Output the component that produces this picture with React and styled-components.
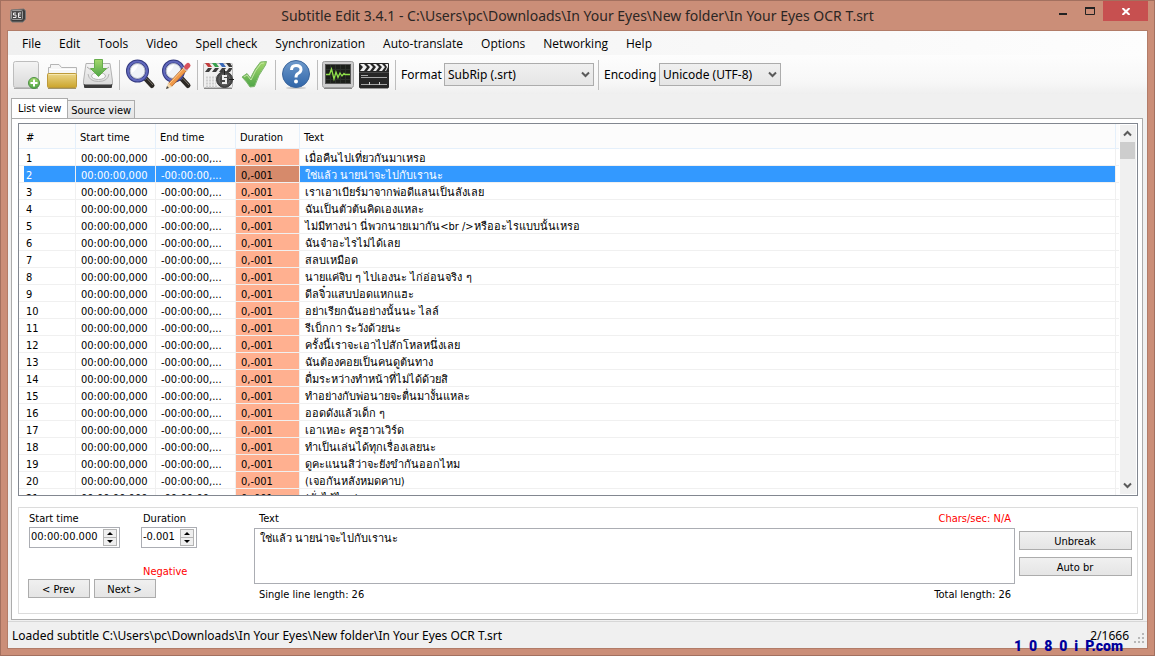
import React, { useState } from "react";
import styled, { createGlobalStyle } from "styled-components";

const uiFont = `"Noto Sans", "Open Sans", sans-serif`;
const menuFont = `"Open Sans", "Noto Sans", sans-serif`;
const listFont = `"DejaVu Sans Condensed", "DejaVu Sans", "Noto Sans", sans-serif`;

const GlobalStyle = createGlobalStyle`
  * {
    box-sizing: border-box;
  }

  body {
    margin: 0;
    color: #000;
    font-family: ${listFont};
    font-size: 11px;
    line-height: 14px;
  }

  button, input, select, textarea {
    margin: 0;
    font: inherit;
    color: inherit;
  }
`;

const Window = styled.div`
  position: relative;
  display: flex;
  flex-direction: column;
  height: 100vh;
  min-height: 480px;
  overflow: hidden;
  padding: 0 6px 6px;
  background: #cb8e78;
  border: 1px solid #a3705f;
`;

const TitleBar = styled.header`
  display: grid;
  grid-template-columns: 1fr auto 1fr;
  flex: none;
  height: 29px;
  color: #2b2624;
`;

const AppIcon = styled.svg`
  width: 16px;
  height: 16px;
  margin: 7px 3px;
`;

const Title = styled.h1`
  margin: 0;
  font-family: ${uiFont};
  font-size: 14px;
  font-weight: 400;
  line-height: 29px;
  white-space: nowrap;
`;

const WindowButtons = styled.div`
  display: flex;
  justify-content: flex-end;
`;

const WindowButton = styled.button`
  display: flex;
  align-items: center;
  justify-content: center;
  width: ${(p) => (p.$close ? 45 : 27)}px;
  height: 20px;
  padding: 0;
  border: none;
  background: ${(p) => (p.$close ? "#c75050" : "transparent")};
`;

const Client = styled.main`
  display: flex;
  flex: 1;
  flex-direction: column;
  min-height: 0;
  background: #f0f0f0;
  border: 1px solid #b27c68;
`;

const MenuBar = styled.nav`
  display: flex;
  flex: none;
  height: 24px;
  padding-left: 5px;
  background: linear-gradient(to right, #f0f0f0, #fdfdfd);
`;

const MenuItem = styled.button`
  padding: 1px 9px 0;
  border: none;
  background: none;
  font-family: ${menuFont};
  font-size: 12px;
  line-height: 23px;
  white-space: nowrap;
`;

const Toolbar = styled.div`
  display: flex;
  flex: none;
  height: 39px;
  padding-top: 2px;
  background: linear-gradient(to bottom, #fdfdfd, #f7f7f7 70%, #efefef);
`;

const ToolButton = styled.button`
  flex: none;
  width: 36px;
  height: 36px;
  padding: 0;
  border: none;
  background: none;

  svg {
    display: block;
  }
`;

const Separator = styled.span`
  flex: none;
  width: 1px;
  height: 30px;
  margin: 3px 2px 0 3px;
  background: #bdbdbd;
`;

const ToolLabel = styled.label`
  margin-left: 3px;
  width: ${(p) => p.$width}px;
  font-family: ${uiFont};
  font-size: 12px;
  line-height: 35px;
`;

const SelectBox = styled.span`
  position: relative;
  width: ${(p) => p.$width}px;
  height: 23px;
  margin: 6px 1px 0 0;

  select {
    width: 100%;
    height: 100%;
    padding: 0 18px 0 3px;
    appearance: none;
    border: 1px solid #acacac;
    border-radius: 0;
    background: linear-gradient(#f0f0f0, #e5e5e5);
    font-family: ${uiFont};
    font-size: 12px;
  }

  svg {
    position: absolute;
    top: 8px;
    right: 4px;
    pointer-events: none;
  }
`;

const TabStrip = styled.div`
  display: flex;
  flex: none;
  align-items: flex-end;
  height: 25px;
  margin: 0 4px -1px 3px;
`;

const Tab = styled.button`
  height: ${(p) => (p.$active ? 21 : 19)}px;
  padding: ${(p) => (p.$active ? "0 6px" : "2px 3px 0")};
  border: 1px solid #acacac;
  border-bottom-color: ${(p) => (p.$active ? "#fff" : "#acacac")};
  border-left-width: ${(p) => (p.$active ? 1 : 0)}px;
  background: ${(p) => (p.$active ? "#fff" : "linear-gradient(#f0f0f0, #e5e5e5)")};
  white-space: nowrap;
`;

const TabPage = styled.section`
  display: flex;
  flex: 1;
  flex-direction: column;
  gap: 11px;
  min-height: 0;
  margin: 0 4px 1px 3px;
  padding: 4px 4px 5px 6px;
  border: 1px solid #acacac;
  background: #fff;
`;

const ListView = styled.div`
  display: flex;
  flex: 1;
  min-height: 0;
  border: 1px solid #828790;
`;

const ListBody = styled.div`
  flex: 1;
  min-width: 0;
  overflow: hidden;
`;

const SubtitleTable = styled.table`
  width: 100%;
  table-layout: fixed;
  border-collapse: separate;
  border-spacing: 0;
`;

const HeadCell = styled.th`
  height: 25px;
  padding: 4px 0 0 ${(p) => (p.$first ? 7 : 4)}px;
  border-right: 1px solid #e5f0fb;
  border-bottom: 1px solid #e5f0fb;
  background: #fcfcfc;
  font-weight: 400;
  text-align: left;

  &:last-child {
    border-right: none;
  }
`;

const Cell = styled.td`
  height: 17px;
  padding: 3px 0 0 5px;
  overflow: hidden;
  border-right: 1px solid #f0f0f0;
  border-bottom: 1px solid #f0f0f0;
  background-clip: padding-box;
  line-height: 13px;
  text-overflow: ellipsis;
  white-space: nowrap;

  &:last-child {
    border-right: none;
  }
`;

const NumberCell = styled(Cell)`
  padding-left: 7px;
`;

const DurationCell = styled(Cell)`
  background-color: #ffb090;
`;

const Row = styled.tr`
  ${(p) =>
    p.$selected &&
    `
    color: #fff;

    ${Cell}:not(:last-child) {
      background-color: #3399ff;
    }

    ${NumberCell} {
      background: linear-gradient(to right, #fff 5px, #3399ff 5px);
      background-clip: padding-box;
    }

    && ${DurationCell} {
      background-color: #d68a6b;
      color: #000;
    }
  `}
`;

const ScrollBar = styled.div`
  display: flex;
  flex: none;
  flex-direction: column;
  width: 16px;
  margin: 1px;
  background: #f0f0f0;
`;

const ScrollButton = styled.button`
  display: flex;
  align-items: center;
  justify-content: center;
  width: 15px;
  height: 17px;
  padding: 0;
  border: none;
  background: none;
`;

const ScrollTrack = styled.div`
  flex: 1;
`;

const ScrollThumb = styled.div`
  width: 15px;
  height: 17px;
  background: #cdcdcd;
`;

const EditPanel = styled.div`
  display: flex;
  flex: none;
  height: 107px;
  padding: 4px 5px 0 9px;
  border: 1px solid #dcdcdc;
`;

const TimePane = styled.div`
  width: 226px;
`;

const FieldRow = styled.div`
  display: flex;
  gap: 21px;
  padding-left: 1px;
`;

const Field = styled.div`
  display: flex;
  flex-direction: column;
  gap: 1px;
  width: ${(p) => p.$width}px;

  label {
    padding-left: ${(p) => p.$indent || 0}px;
  }
`;

const Spinner = styled.div`
  display: flex;
  height: 21px;
  padding: 1px;
  border: 1px solid #abadb3;

  input {
    flex: 1;
    min-width: 0;
    padding: 0 0 2px;
    border: none;
    outline: none;
    background: none;
  }
`;

const SpinButtons = styled.span`
  display: flex;
  flex-direction: column;
  width: 14px;
  margin-right: 1px;
`;

const SpinButton = styled.button`
  display: flex;
  align-items: center;
  justify-content: center;
  flex: 1;
  padding: 0;
  border: 1px solid #b4b4b4;
  background: #efefef;

  & + & {
    border-top: none;
  }
`;

const Warning = styled.p`
  margin: ${(p) => (p.$indented ? "17px 0 0 115px" : 0)};
  color: #f00;
`;

const NavRow = styled.div`
  display: flex;
  gap: 4px;
`;

const PushButton = styled.button`
  width: ${(p) => p.$width}px;
  height: 19px;
  padding: 2px 1px 0 0;
  border: 1px solid #acacac;
  background: linear-gradient(#f0f0f0, #e5e5e5);
`;

const TextPane = styled.div`
  display: flex;
  flex: 1;
  flex-direction: column;
  min-width: 0;
  margin-right: 4px;

  textarea {
    height: 56px;
    margin: 2px 0 4px;
    padding: 3px 5px;
    border: 1px solid #abadb3;
    border-radius: 0;
    outline: none;
    resize: none;
  }
`;

const TextRow = styled.div`
  display: flex;
  justify-content: space-between;
  padding: 0 4px 0 5px;
`;

const ActionPane = styled.div`
  display: flex;
  flex-direction: column;
  gap: 7px;
  padding-top: 19px;
`;

const StatusBar = styled.footer`
  display: flex;
  flex: none;
  justify-content: space-between;
  height: 27px;
  padding: 0 2px 0 4px;
  border-top: 1px solid #d7d7d7;
  font-family: ${uiFont};
  font-size: 12px;
  line-height: 28px;
`;

const StatusEnd = styled.span`
  display: flex;
  gap: 4px;

  svg {
    align-self: flex-end;
  }
`;

const Watermark = styled.span`
  position: absolute;
  right: 31px;
  bottom: 2px;
  color: #00009c;
  font-family: Roboto, "Liberation Sans", sans-serif;
  font-size: 14px;
  font-weight: 900;
  line-height: 14px;
  white-space: pre;
`;

const Chevron = ({ up }) => (
  <svg width="9" height="7" viewBox="0 0 9 7" aria-hidden="true">
    <path
      d={up ? "M1 5.5L4.5 2L8 5.5" : "M1 1.5L4.5 5L8 1.5"}
      fill="none"
      stroke="#5a5a5a"
      strokeWidth="2"
    />
  </svg>
);

const SpinArrow = ({ up }) => (
  <svg width="6" height="3" viewBox="0 0 6 3" aria-hidden="true">
    <path d={up ? "M0 3L3 0L6 3Z" : "M0 0L3 3L6 0Z"} fill="#000" />
  </svg>
);

const Svg = ({ children }) => (
  <svg width="36" height="36" viewBox="0 0 36 36" aria-hidden="true">
    {children}
  </svg>
);

// the paper and leaf gradients are used by the other toolbar icons too
const NewIcon = () => (
  <Svg>
    <defs>
      <linearGradient id="paper" x1="0" y1="0" x2="0" y2="1">
        <stop offset="0" stopColor="#f4f4f4" />
        <stop offset="1" stopColor="#dadada" />
      </linearGradient>
      <linearGradient id="leaf" x1="0" y1="0" x2="0" y2="1">
        <stop offset="0" stopColor="#a4d86c" />
        <stop offset="1" stopColor="#4fa548" />
      </linearGradient>
    </defs>
    <rect x="5.5" y="4.5" width="25" height="26" rx="2" fill="url(#paper)" stroke="#bdbdbd" />
    <path d="M6 31.5H30" stroke="#aaa" />
    <circle cx="26" cy="26" r="5.5" fill="url(#leaf)" stroke="#4c8f45" />
    <path d="M26 22.5V29.5M22.5 26H29.5" stroke="#fff" strokeWidth="2" />
  </Svg>
);

const OpenIcon = () => (
  <Svg>
    <defs>
      <linearGradient id="gold" x1="0" y1="0" x2="0" y2="1">
        <stop offset="0" stopColor="#ecd68a" />
        <stop offset="1" stopColor="#cba52c" />
      </linearGradient>
    </defs>
    <path d="M4.5 17V10.5H6.5V7.5H15L17.5 10.5H32.5V17" fill="#f6f6f6" stroke="#b5b5b5" />
    <path d="M6 12.5H31" stroke="#fff" />
    <rect x="3.5" y="16.5" width="29" height="14" rx="1" fill="url(#gold)" stroke="#bd9a3a" />
    <path d="M5 17.5H31" stroke="#f6e7ad" />
    <path d="M4 31.5H32" stroke="#a1946a" />
  </Svg>
);

const SaveIcon = () => (
  <Svg>
    <path d="M6 6.5H30L32.5 24V28H3.5V24Z" fill="url(#paper)" stroke="#b2b2b2" />
    <path d="M7 10L11 13M29 10L25 13" stroke="#aaa" />
    <path d="M8 17Q9 24.5 18.5 24.5Q28 24.5 29 17" fill="none" stroke="#b5b5b5" />
    <ellipse cx="18.5" cy="19" rx="7" ry="3.5" fill="#fafafa" stroke="#b5b5b5" />
    <rect x="4" y="27" width="28" height="4" rx="1" fill="#3b3b3b" />
    <path d="M5 27.5H31" stroke="#888" />
    <path
      d="M14.5 2.5H22.5V11.5H26.5L18.5 19.5L10.5 11.5H14.5Z"
      fill="url(#leaf)"
      stroke="#67ad4c"
    />
  </Svg>
);

const Lens = () => (
  <>
    <path d="M24 22L30 28.5" stroke="#2c2925" strokeWidth="5" strokeLinecap="round" />
    <path d="M25 21.5L31 28" stroke="#7d766c" strokeWidth="1" />
    <path d="M21 19L24 22" stroke="#8d8d8d" strokeWidth="3" />
    <circle cx="15.5" cy="14" r="9.5" fill="#f0f3f7" stroke="#343a80" strokeWidth="4" />
    <circle cx="15.5" cy="14" r="9.5" fill="none" stroke="#6169bd" strokeWidth="2" />
    <circle cx="15.5" cy="14" r="7.5" fill="none" stroke="#b5bac8" />
    <path d="M9.5 14A6 6 0 0 1 16 8Q14 14 9.5 16Z" fill="#fff" />
  </>
);

const FindIcon = () => (
  <Svg>
    <Lens />
  </Svg>
);

const ReplaceIcon = () => (
  <Svg>
    <Lens />
    <path d="M12 28L28 11" stroke="#a8602a" strokeWidth="5" />
    <path d="M12 28L28 11" stroke="#f09a4a" strokeWidth="4" />
    <path d="M11 27L27 10" stroke="#ffcf96" strokeWidth="1" />
    <path d="M26.5 12.5L28.5 10.5" stroke="#c9ccd2" strokeWidth="5" />
    <path d="M28.5 10L30 8.5" stroke="#d8525c" strokeWidth="5" strokeLinecap="round" />
    <path d="M8 32L10 26L14 30Z" fill="#f3d9ae" />
    <path d="M8 32L9 29L11 31Z" fill="#444" />
  </Svg>
);

const SyncIcon = () => (
  <Svg>
    <rect x="3.5" y="6.5" width="29" height="24" rx="1" fill="#efefef" stroke="#bcbcbc" />
    <path d="M4 31.5H32" stroke="#888" />
    <path d="M5 6H9L12 10H8Z" fill="#c23c3c" />
    <path d="M12 6H16L19 10H15Z" fill="#37a04c" />
    <path d="M19 6H23L26 10H22Z" fill="#3767b8" />
    <path d="M26 6H30L32 9V10H29Z" fill="#3a3a3a" />
    <path
      d="M8 11H12L9 15H5ZM15 11H19L16 15H12ZM22 11H26L23 15H19ZM29 11H32V12L30 15H26Z"
      fill="#3d3d3d"
    />
    <path
      d="M6 20.5H18M6 23.5H16M6 26.5H16M6 29.5H18"
      stroke="#cfcfcf"
      strokeWidth="2"
      strokeDasharray="2 1"
    />
    <circle cx="24.5" cy="22.5" r="8" fill="#484848" stroke="#383838" />
    <circle cx="24.5" cy="22.5" r="5.5" fill="none" stroke="#6a6a6a" />
    <path d="M27 19H23V22H26V26H22" fill="none" stroke="#eee" strokeWidth="2" />
    <path d="M24.5 13V18M29 22.5H34" stroke="#1c1c1c" />
  </Svg>
);

const CheckIcon = () => (
  <Svg>
    <path
      d="M6 20L11 16.5L14.5 21Q19 11 24.5 5L30.5 4.5L29.5 8Q22 18 18.5 29.5L14 30Q11 25 6 20Z"
      fill="url(#leaf)"
      stroke="#7db56c"
    />
    <path d="M8 20L11 18L15 23Q19 13 25 6.5L28 6" fill="none" stroke="#c4e5a6" />
  </Svg>
);

const HelpIcon = () => (
  <Svg>
    <defs>
      <linearGradient id="sea" x1="0" y1="0" x2="0" y2="1">
        <stop offset="0" stopColor="#6f9acc" />
        <stop offset="1" stopColor="#2f65a8" />
      </linearGradient>
    </defs>
    <ellipse cx="18" cy="31" rx="10" ry="1" fill="#c9c9c9" />
    <circle cx="18" cy="17" r="13.5" fill="url(#sea)" stroke="#3b659c" />
    <path
      d="M13.5 13Q13.5 8.5 18 8.5Q23 8.5 23 12.5Q23 15 20 16.5Q18 17.5 18 20.5"
      fill="none"
      stroke="#fff"
      strokeWidth="3"
    />
    <circle cx="18" cy="24.5" r="2" fill="#fff" />
  </Svg>
);

const WaveIcon = () => (
  <Svg>
    <rect x="2.5" y="4.5" width="31" height="26" rx="2" fill="#cdcdcd" stroke="#9d9d9d" />
    <path d="M4 31.5H32" stroke="#888" />
    <rect x="5.5" y="7.5" width="25" height="19" fill="#1c1f1a" stroke="#555" />
    <path
      d="M10.5 8V26M15.5 8V26M20.5 8V26M25.5 8V26M6 12.5H30M6 17.5H30M6 22.5H30"
      stroke="#2b302a"
    />
    <path
      d="M6 17.5H9.5L11.5 12L14 22L16 15L18 20.5L20 16L22 19L24 16.5L25 17.5H30"
      fill="none"
      stroke="#8fe04a"
      strokeWidth="1.3"
    />
  </Svg>
);

const VideoIcon = () => (
  <Svg>
    <rect x="3" y="6" width="30" height="25" rx="1" fill="#262626" />
    <path d="M4 31.5H32" stroke="#999" />
    <path
      d="M4 7H8L11 10L8 14H4L7 10ZM11 7H14L17 10L14 14H11L14 10ZM17 7H20L23 10L20 14H17L20 10ZM23 7H26L29 10L26 14H23L26 10ZM29 7H32V10L30 14H29L31 10Z"
      fill="#f0f0f0"
    />
    <path d="M3 15.5H33" stroke="#4a4a4a" />
    <path d="M5 18.5H12M5 20.5H31M5 27.5H31" stroke="#a5a5a5" />
    <path d="M13.5 25V28M23.5 25V28" stroke="#ccc" />
  </Svg>
);

const menuItems = [
  "File",
  "Edit",
  "Tools",
  "Video",
  "Spell check",
  "Synchronization",
  "Auto-translate",
  "Options",
  "Networking",
  "Help",
];

const toolGroups = [
  [
    ["New", NewIcon],
    ["Open", OpenIcon],
    ["Save", SaveIcon],
  ],
  [
    ["Find", FindIcon],
    ["Replace", ReplaceIcon],
  ],
  [
    ["Visual sync", SyncIcon],
    ["Spell check", CheckIcon],
  ],
  [["Help", HelpIcon]],
  [
    ["Show waveform", WaveIcon],
    ["Show video", VideoIcon],
  ],
];

const lines = [
  "เมื่อคืนไปเที่ยวกันมาเหรอ",
  "ใช่แล้ว นายน่าจะไปกับเรานะ",
  "เราเอาเบียร์มาจากพ่อดีแลนเป็นลังเลย",
  "ฉันเป็นตัวต้นคิดเองแหละ",
  "ไม่มีทางน่า นี่พวกนายเมากัน<br />หรืออะไรแบบนั้นเหรอ",
  "ฉันจำอะไรไม่ได้เลย",
  "สลบเหมือด",
  "นายแค่จิบ ๆ ไปเองนะ ไก่อ่อนจริง ๆ",
  "ดีลจิ๋วแสบปอดแหกแฮะ",
  "อย่าเรียกฉันอย่างนั้นนะ ไลล์",
  "รีเบ็กกา ระวังด้วยนะ",
  "ครั้งนี้เราจะเอาไปสักโหลหนึ่งเลย",
  "ฉันต้องคอยเป็นคนดูต้นทาง",
  "ดื่มระหว่างทำหน้าที่ไม่ได้ด้วยสิ",
  "ทำอย่างกับพ่อนายจะตื่นมางั้นแหละ",
  "ออดดังแล้วเด็ก ๆ",
  "เอาเหอะ ครูฮาวเวิร์ด",
  "ทำเป็นเล่นได้ทุกเรื่องเลยนะ",
  "ดูคะแนนสิว่าจะยังขำกันออกไหม",
  "(เจอกันหลังหมดคาบ)",
  "(นั่งได้ไหม)",
];

export default function App() {
  const [selected, setSelected] = useState(1);
  const [text, setText] = useState(lines[1]);

  const selectLine = (index) => {
    setSelected(index);
    setText(lines[index]);
  };

  return (
    <>
      <GlobalStyle />
      <Window>
        <TitleBar>
          <AppIcon viewBox="0 0 16 16" aria-hidden="true">
            <path d="M1 2L14 1L15.5 3V11L13 14H2L0.5 12Z" fill="#3c3c3c" stroke="#777" />
            <rect x="1.5" y="2.5" width="11" height="9" rx="1" fill="#4a4a4a" stroke="#999" />
            <path
              d="M6 5H3.5V7H6V9.5H3M11 5H8.5V9.5H11M8.5 7H10.5"
              fill="none"
              stroke="#eee"
            />
          </AppIcon>
          <Title>
            Subtitle Edit 3.4.1 - C:\Users\pc\Downloads\In Your Eyes\New folder\In Your Eyes OCR T.srt
          </Title>
          <WindowButtons>
            <WindowButton aria-label="Minimize">
              <svg width="8" height="8" viewBox="0 0 8 8">
                <path d="M0 7H8" stroke="#222" strokeWidth="2" />
              </svg>
            </WindowButton>
            <WindowButton aria-label="Maximize">
              <svg width="10" height="8" viewBox="0 0 10 8">
                <path d="M0 1H10" stroke="#222" strokeWidth="2" />
                <path d="M0.5 1V7.5H9.5V1" fill="none" stroke="#222" />
              </svg>
            </WindowButton>
            <WindowButton $close aria-label="Close">
              <svg width="8" height="7" viewBox="0 0 8 7">
                <path d="M0.5 0L7.5 7M7.5 0L0.5 7" stroke="#fff" strokeWidth="2" />
              </svg>
            </WindowButton>
          </WindowButtons>
        </TitleBar>

        <Client>
          <MenuBar>
            {menuItems.map((item) => (
              <MenuItem key={item}>{item}</MenuItem>
            ))}
          </MenuBar>

          <Toolbar>
            {toolGroups.map((group, i) => (
              <React.Fragment key={i}>
                {group.map(([name, Icon]) => (
                  <ToolButton key={name} aria-label={name}>
                    <Icon />
                  </ToolButton>
                ))}
                <Separator />
              </React.Fragment>
            ))}
            <ToolLabel htmlFor="format" $width={43}>
              Format
            </ToolLabel>
            <SelectBox $width={150}>
              <select id="format">
                <option>SubRip (.srt)</option>
              </select>
              <Chevron />
            </SelectBox>
            <Separator />
            <ToolLabel htmlFor="encoding" $width={55}>
              Encoding
            </ToolLabel>
            <SelectBox $width={122}>
              <select id="encoding">
                <option>Unicode (UTF-8)</option>
              </select>
              <Chevron />
            </SelectBox>
          </Toolbar>

          <TabStrip role="tablist">
            <Tab $active role="tab" aria-selected="true">
              List view
            </Tab>
            <Tab role="tab" aria-selected="false">
              Source view
            </Tab>
          </TabStrip>

          <TabPage>
            <ListView>
              <ListBody>
                <SubtitleTable>
                  <colgroup>
                    <col width="57" />
                    <col width="80" />
                    <col width="80" />
                    <col width="64" />
                    <col />
                    <col width="3" />
                  </colgroup>
                  <thead>
                    <tr>
                      <HeadCell $first>#</HeadCell>
                      <HeadCell>Start time</HeadCell>
                      <HeadCell>End time</HeadCell>
                      <HeadCell>Duration</HeadCell>
                      <HeadCell>Text</HeadCell>
                      <HeadCell as="td" />
                    </tr>
                  </thead>
                  <tbody>
                    {lines.map((line, i) => (
                      <Row key={i} $selected={i === selected} onClick={() => selectLine(i)}>
                        <NumberCell>{i + 1}</NumberCell>
                        <Cell>00:00:00,000</Cell>
                        <Cell>-00:00:00,...</Cell>
                        <DurationCell>0,-001</DurationCell>
                        <Cell>{line}</Cell>
                        <Cell />
                      </Row>
                    ))}
                  </tbody>
                </SubtitleTable>
              </ListBody>
              <ScrollBar>
                <ScrollButton aria-label="Scroll up">
                  <Chevron up />
                </ScrollButton>
                <ScrollTrack>
                  <ScrollThumb />
                </ScrollTrack>
                <ScrollButton aria-label="Scroll down">
                  <Chevron />
                </ScrollButton>
              </ScrollBar>
            </ListView>

            <EditPanel>
              <TimePane>
                <FieldRow>
                  <Field $width={91}>
                    <label htmlFor="start">Start time</label>
                    <Spinner>
                      <input id="start" defaultValue="00:00:00.000" />
                      <SpinButtons>
                        <SpinButton aria-label="Start time up">
                          <SpinArrow up />
                        </SpinButton>
                        <SpinButton aria-label="Start time down">
                          <SpinArrow />
                        </SpinButton>
                      </SpinButtons>
                    </Spinner>
                  </Field>
                  <Field $width={56} $indent={2}>
                    <label htmlFor="duration">Duration</label>
                    <Spinner>
                      <input id="duration" defaultValue="-0.001" />
                      <SpinButtons>
                        <SpinButton aria-label="Duration up">
                          <SpinArrow up />
                        </SpinButton>
                        <SpinButton aria-label="Duration down">
                          <SpinArrow />
                        </SpinButton>
                      </SpinButtons>
                    </Spinner>
                  </Field>
                </FieldRow>
                <Warning $indented>Negative</Warning>
                <NavRow>
                  <PushButton $width={62}>&lt; Prev</PushButton>
                  <PushButton $width={62}>Next &gt;</PushButton>
                </NavRow>
              </TimePane>

              <TextPane>
                <TextRow>
                  <label htmlFor="text">Text</label>
                  <Warning>Chars/sec: N/A</Warning>
                </TextRow>
                <textarea
                  id="text"
                  spellCheck="false"
                  value={text}
                  onChange={(e) => setText(e.target.value)}
                />
                <TextRow>
                  <span>Single line length: 26</span>
                  <span>Total length: 26</span>
                </TextRow>
              </TextPane>

              <ActionPane>
                <PushButton $width={113}>Unbreak</PushButton>
                <PushButton $width={113}>Auto br</PushButton>
              </ActionPane>
            </EditPanel>
          </TabPage>

          <StatusBar>
            <span>
              Loaded subtitle C:\Users\pc\Downloads\In Your Eyes\New folder\In Your Eyes OCR T.srt
            </span>
            <StatusEnd>
              {selected + 1}/1666
              <svg width="12" height="16" viewBox="0 0 12 16" aria-hidden="true">
                <path
                  d="M9 1H11V3H9ZM9 5H11V7H9ZM9 9H11V11H9ZM5 5H7V7H5ZM5 9H7V11H5ZM1 9H3V11H1Z"
                  fill="#b8b8b8"
                />
              </svg>
            </StatusEnd>
          </StatusBar>
        </Client>
        <Watermark>1  0  8  0  i  P.com</Watermark>
      </Window>
    </>
  );
}
